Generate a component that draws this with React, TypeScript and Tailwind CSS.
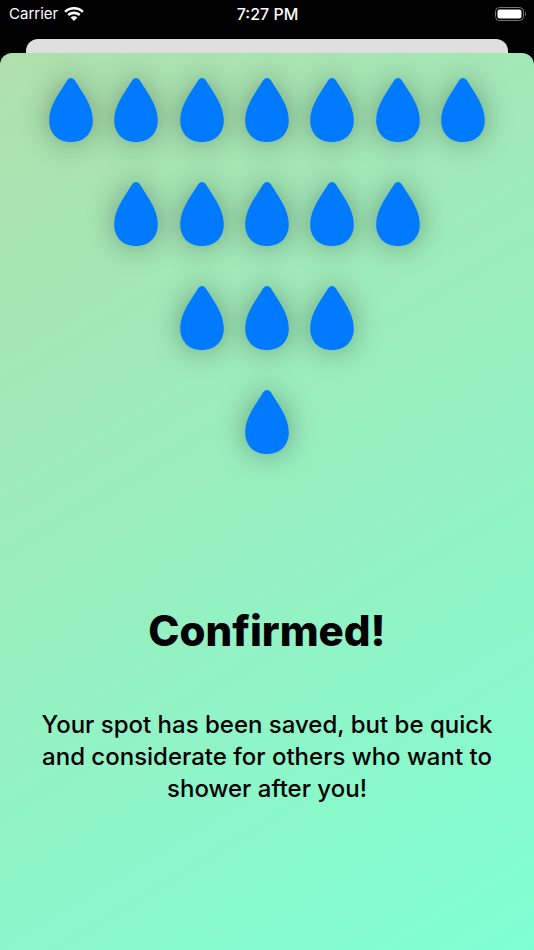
import React from "react";

const Drop: React.FC = () => (
  <svg
    viewBox="0 0 44 64"
    className="h-16 w-11 overflow-visible fill-[#007aff] drop-shadow-[0_0_14px_rgba(0,0,0,0.33)]"
    aria-hidden="true"
  >
    <path d="M22 0C20.300 0 19.200 0.900 18 2.600L11.500 12.800C5.500 22 0.200 32 0.200 42.500C0.200 55.500 9 64 22 64C35 64 43.800 55.500 43.800 42.500C43.800 32 38.500 22 32.500 12.800L26 2.600C24.800 0.900 23.700 0 22 0Z" />
  </svg>
);

const rows = [7, 5, 3, 1];

const StatusBar: React.FC = () => (
  <header className="grid h-7 grid-cols-3 items-center pr-2 pl-[9px] text-[15px] text-white">
    <div className="flex items-center gap-1.5">
      <span>Carrier</span>
      <svg viewBox="0 0 20 14" className="h-3.5 w-5 fill-white" aria-hidden="true">
        <path d="M10 0C6.200 0 2.700 1.500 0.200 3.900L2 5.800C4.100 3.800 6.900 2.600 10 2.600S15.900 3.800 18 5.800L19.800 3.900C17.300 1.500 13.800 0 10 0Z" />
        <path d="M10 4.600C7.400 4.600 5.100 5.600 3.400 7.200L5.200 9.100C6.500 7.900 8.100 7.200 10 7.200S13.500 7.900 14.800 9.100L16.600 7.200C14.900 5.600 12.600 4.600 10 4.600Z" />
        <path d="M10 9.200C8.600 9.200 7.500 9.700 6.600 10.500L10 14L13.400 10.500C12.500 9.700 11.400 9.200 10 9.200Z" />
      </svg>
    </div>
    <time className="text-center text-base font-medium">7:27 PM</time>
    <svg viewBox="0 0 32 14" className="h-3.5 w-8 justify-self-end" aria-hidden="true">
      <rect x="1.500" y="0.500" width="28" height="13" rx="4" fill="none" stroke="#777" />
      <rect x="3.500" y="2.500" width="24" height="9" rx="2" fill="#fff" />
      <path d="M31 5C32.300 5.500 32.300 8.500 31 9Z" fill="#777" />
    </svg>
  </header>
);

const App: React.FC = () => (
  <div className="flex min-h-screen flex-col bg-black font-[Inter,sans-serif]">
    <StatusBar />
    <div className="mx-[26px] mt-[11px] h-3.5 rounded-t-xl bg-[#dfdfdf]" />
    <main className="flex flex-1 flex-col items-center rounded-t-xl bg-linear-[149deg] from-[#afdfac] to-[#7fffd4] pt-[25px] text-center text-black">
      <div className="flex w-full max-w-[457px] flex-col gap-10">
        {rows.map((count) => (
          <div key={count} className="flex justify-center">
            {Array.from({ length: count }, (_, i) => (
              <div key={i} className="flex w-1/7 justify-center">
                <Drop />
              </div>
            ))}
          </div>
        ))}
      </div>
      <h1 className="mt-[151px] text-[42px] leading-[52px] font-extrabold">Confirmed!</h1>
      <p className="mt-[52px] px-8 text-2xl leading-8 font-medium">
        Your spot has been saved, but be quick and considerate for others who want to shower after you!
      </p>
    </main>
  </div>
);

export default App;
